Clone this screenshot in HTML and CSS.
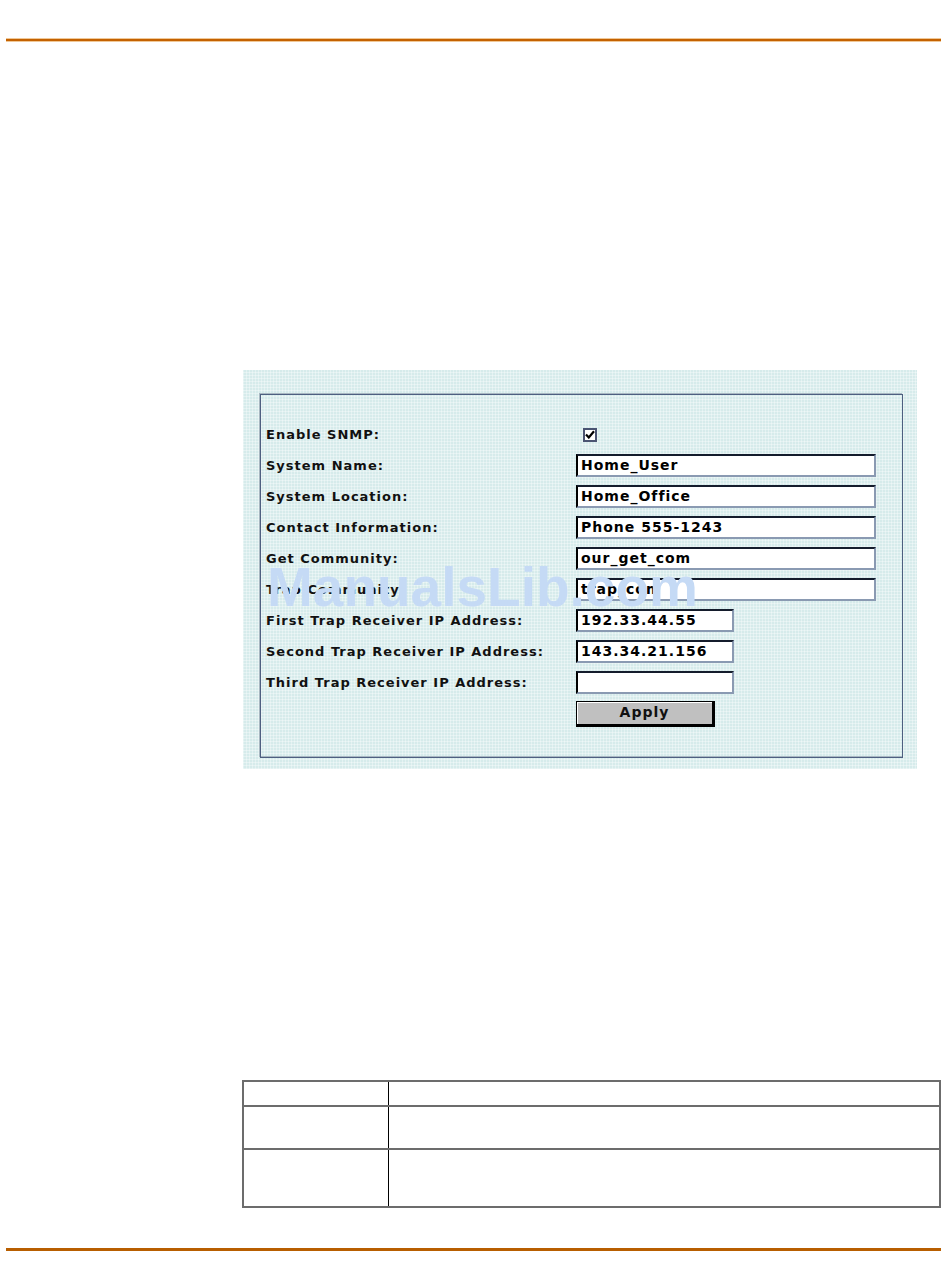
FILE: index.html
```html
<!DOCTYPE html>
<html lang="en">
<head>
  <meta charset="UTF-8">
  <meta name="viewport" content="width=device-width, initial-scale=1.0">
  <title>SNMP</title>
  <link rel="stylesheet" href="styles.css">
</head>
<body>
  <div class="page">
    <div class="rule top"></div>

    <div class="figure">
      <div class="box">
        <div class="form">
          <div class="label">Enable SNMP:</div>
          <div class="field"><span class="check"><svg width="10" height="9" viewBox="0 0 10 9"><path d="M1 4.5 L3.8 7.5 L9 1.2" fill="none" stroke="#000" stroke-width="2.2"/></svg></span></div>

          <div class="label">System Name:</div>
          <div class="field"><span class="input">Home_User</span></div>

          <div class="label">System Location:</div>
          <div class="field"><span class="input">Home_Office</span></div>

          <div class="label">Contact Information:</div>
          <div class="field"><span class="input">Phone 555-1243</span></div>

          <div class="label">Get Community:</div>
          <div class="field"><span class="input">our_get_com</span></div>

          <div class="label">Trap Community:</div>
          <div class="field"><span class="input">trap_com</span></div>

          <div class="label">First Trap Receiver IP Address:</div>
          <div class="field"><span class="input short">192.33.44.55</span></div>

          <div class="label">Second Trap Receiver IP Address:</div>
          <div class="field"><span class="input short">143.34.21.156</span></div>

          <div class="label">Third Trap Receiver IP Address:</div>
          <div class="field"><span class="input short"></span></div>

          <div class="label"></div>
          <div class="field"><span class="button">Apply</span></div>
        </div>
      </div>
      <div class="watermark">ManualsLib.com</div>
    </div>

    <table class="params">
      <tr class="head"><td class="name"></td><td></td></tr>
      <tr class="mid"><td class="name"></td><td></td></tr>
      <tr class="last"><td class="name"></td><td></td></tr>
    </table>

    <div class="rule bottom"></div>
  </div>
</body>
</html>
```

FILE: styles.css
```css
* {
  margin:0;
  padding:0;
  box-sizing:border-box;
}

body {
  background:#fff;
  font-family:"DejaVu Sans", Verdana, sans-serif;
}

.page {
  padding-top:39px;
}

.rule {
  margin-left:6px;
  width:935px;
}

.rule.top {
  height:2px;
  background:#c46200;
  box-shadow:0 -1px 0 #f0c898, 0 1px 0 #f0c898;
}

.rule.bottom {
  margin-top:40px;
  height:3px;
  background:#b85e00;
}

.figure {
  position:relative;
  margin:329px 0 0 243px;
  width:674px;
  padding:24px 14px 11px 17px;
  background-color:#d6ebeb;
  background-image:
    repeating-linear-gradient(0deg, rgba(255,255,255,.35) 0 1px, transparent 1px 3px),
    repeating-linear-gradient(90deg, rgba(255,255,255,.35) 0 1px, transparent 1px 3px);
}

.box {
  border:1px solid #4e5f80;
  box-shadow:-1px -1px 0 #a9b8c2, inset 0 -1px 0 #a9b8c2;
  padding:24px 0 28px 5px;
}

.form {
  display:grid;
  grid-template-columns:310px 1fr;
  grid-auto-rows:31px;
  align-items:center;
}

.label {
  font-size:13px;
  font-weight:bold;
  letter-spacing:1px;
  color:#111;
  white-space:nowrap;
}

.field {
  display:flex;
  align-items:center;
}

.check {
  margin-left:7px;
  width:14px;
  height:14px;
  background:#fff;
  border:2px solid #4a5472;
  display:flex;
  align-items:center;
  justify-content:center;
}

.input {
  display:block;
  width:300px;
  height:23px;
  background:#fff;
  border-style:solid;
  border-width:2px;
  border-color:#141c2c #8a9ab2 #8a9ab2 #000;
  padding:0 0 0 3px;
  font-size:14px;
  font-weight:bold;
  letter-spacing:1px;
  line-height:19px;
  color:#000;
  white-space:nowrap;
  overflow:hidden;
}

.input.short {
  width:158px;
}

.button {
  display:block;
  width:139px;
  height:26px;
  background:#c0c0c0;
  border-style:solid;
  border-color:#000;
  border-width:1px 3px 3px 1px;
  box-shadow:inset 1px 1px 0 #fff;
  text-align:center;
  font-size:14px;
  font-weight:bold;
  letter-spacing:1px;
  line-height:21px;
  color:#111;
}

.watermark {
  position:absolute;
  left:24px;
  top:190px;
  font-family:"Liberation Sans", Arial, sans-serif;
  font-weight:bold;
  font-size:55px;
  line-height:55px;
  color:#c5daf5;
  white-space:nowrap;
  pointer-events:none;
}

.params {
  margin:311px 0 0 242px;
  width:699px;
  border-collapse:collapse;
  border:2px solid #6c6c6c;
}

.params td {
  border-bottom:2px solid #6c6c6c;
}

.params td.name {
  width:145px;
  border-right:1px solid #000;
}

.params tr.head td {
  height:25px;
}

.params tr.mid td {
  height:43px;
}

.params tr.last td {
  height:58px;
}
```
